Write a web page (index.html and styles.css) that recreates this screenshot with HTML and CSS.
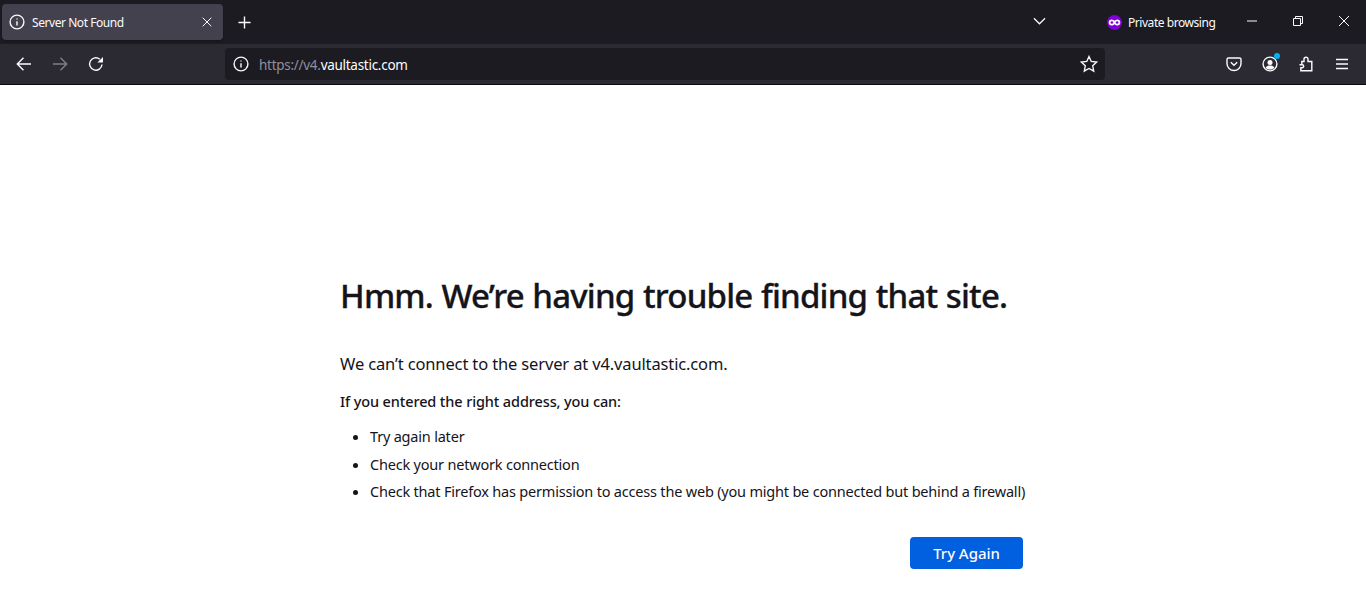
FILE: index.html
```html
<!DOCTYPE html>
<html lang="en">
<head>
<meta charset="utf-8">
<title>Server Not Found</title>
<link rel="stylesheet" href="styles.css">
</head>
<body>
<header class="chrome">
  <div class="tabbar">
    <div class="tab">
      <svg class="ic16" viewBox="0 0 16 16"><circle cx="8" cy="8" r="6.9"/><path d="M8 7.2v4.2M8 4.400v1.200"/></svg>
      <span class="tab-title">Server Not Found</span>
      <svg class="tab-close" viewBox="0 0 10 10"><path d="M.7.7l8.600 8.600M9.300.7L.7 9.300"/></svg>
    </div>
    <svg class="new-tab" viewBox="0 0 14 14"><path d="M7 .5v13M.5 7h13"/></svg>
    <svg class="tab-list" viewBox="0 0 14 8"><path d="M1 1l6 6 6-6"/></svg>
    <div class="private">
      <svg class="mask" viewBox="0 0 16 16"><circle cx="8" cy="8" r="8" class="mask-bg"/><path class="mask-fg" d="M5 4.800c1.400 0 2.200.8 3 1.400C8.800 5.600 9.600 4.800 11 4.800c1.900 0 3.200 1.300 3.200 3.200s-1.300 3.200-3.200 3.200c-1.400 0-2.200-.8-3-1.400-.8.6-1.600 1.400-3 1.400-1.900 0-3.200-1.300-3.200-3.200S3.100 4.800 5 4.800z"/><circle cx="5.200" cy="8" r="1.400" class="mask-bg"/><circle cx="10.800" cy="8" r="1.400" class="mask-bg"/></svg>
      <span>Private browsing</span>
    </div>
    <div class="win-controls">
      <svg viewBox="0 0 10 10" class="win"><path d="M0 5h10"/></svg>
      <svg viewBox="0 0 10 10" class="win"><path d="M.5 2.500h7v7h-7zM2.500 2.500V.5h7v7H7.500"/></svg>
      <svg viewBox="0 0 10 10" class="win"><path d="M0 0l10 10M10 0L0 10"/></svg>
    </div>
  </div>
  <div class="toolbar">
    <div class="nav">
      <svg class="ic16" viewBox="0 0 16 16"><path d="M15 8H1.500M7.500 1.800L1.300 8l6.200 6.200"/></svg>
      <svg class="ic16 dim" viewBox="0 0 16 16"><path d="M1 8h13.500M8.500 1.800L14.700 8l-6.200 6.200"/></svg>
      <svg class="ic16" viewBox="0 0 16 16"><path d="M14 8.500A6.200 6.200 0 1 1 11.800 3.200"/><path class="fill" d="M15 1v5.600H9.400z"/></svg>
    </div>
    <div class="urlbar">
      <svg class="ic16" viewBox="0 0 16 16"><circle cx="8" cy="8" r="6.900"/><path d="M8 7.200v4.200M8 4.400v1.200"/></svg>
      <span class="url"><span class="url-dim">https://v4.</span>vaultastic.com</span>
      <svg class="ic18 star" viewBox="0 0 16 16"><path d="M8 1.300l2 4.400 4.800.6-3.500 3.300.9 4.800L8 12l-4.200 2.400.9-4.800L1.200 6.300 6 5.700z"/></svg>
    </div>
    <div class="tools">
      <svg class="ic16" viewBox="0 0 16 16"><path d="M2.500 2h11A1.500 1.500 0 0 1 15 3.500V7.500a7 7 0 0 1-14 0V3.500A1.500 1.500 0 0 1 2.500 2z"/><path d="M4.800 6.300L8 9.300l3.200-3"/></svg>
      <span class="account">
        <svg class="ic16" viewBox="0 0 16 16"><circle cx="8" cy="8" r="6.900"/><circle class="fill" cx="8" cy="6.400" r="2.500"/><path class="fill" d="M3.500 11.800c1-1.600 2.500-2.200 4.500-2.200s3.500.6 4.500 2.200C11.300 13 9.800 13.600 8 13.600s-3.300-.6-4.500-1.800z"/></svg>
        <i class="badge"></i>
      </span>
      <svg class="ic16 puzzle" viewBox="0 0 16 16"><path d="M1.500 8.700h2.700a1.500 1.500 0 0 1 0 3H2.800v3.100h11V5.500H10V3.200a2 2 0 0 0-4 0v2.300H3.800v3.200"/></svg>
      <svg class="ic16" viewBox="0 0 16 16"><path d="M2 3.500h12M2 8h12M2 12.500h12"/></svg>
    </div>
  </div>
</header>
<main class="page">
  <div class="content">
    <h1>Hmm. We’re having trouble finding that site.</h1>
    <p class="lead">We can’t connect to the server at v4.vaultastic.com.</p>
    <p class="sub">If you entered the right address, you can:</p>
    <ul>
      <li>Try again later</li>
      <li>Check your network connection</li>
      <li>Check that Firefox has permission to access the web (you might be connected but behind a firewall)</li>
    </ul>
    <div class="actions"><button class="retry">Try Again</button></div>
  </div>
</main>
</body>
</html>
```
FILE: styles.css
```css
* { box-sizing: border-box; }
html, body { margin: 0; height: 100%; overflow: hidden; background: #fff; }
body { font-family: "Noto Sans", "Open Sans", sans-serif; color: #15141a; }
svg { display: block; flex: none; fill: none; stroke: #fbfbfe; stroke-width: 1.4; }
.fill { fill: #fbfbfe; stroke: none; }
.ic16 { width: 16px; height: 16px; }
.ic18 { width: 18px; height: 18px; }
.dim { opacity: .4; }

.chrome { color: #fbfbfe; }
.tabbar { height: 44px; background: #1c1b22; display: flex; align-items: center; padding: 0 0 0 2px; }
.tab { width: 221px; height: 36px; background: #42414d; border-radius: 4px; display: flex; align-items: center; padding: 0 11px 0 7px; box-shadow: 0 1px 2px rgba(0,0,0,.3); }
.tab-title { font-size: 12px; margin-left: 7px; flex: 1; letter-spacing: -.44px; }
.tab-close { width: 10px; height: 10px; stroke-width: 1; }
.new-tab { width: 13px; height: 13px; margin-left: 15px; stroke-width: 1.500; }
.tab-list { width: 13px; height: 8px; margin-left: 782px; margin-top: -2px; stroke-width: 1.300; }
.private { display: flex; align-items: center; margin-left: 61px; font-size: 12px; letter-spacing: -.45px; }
.mask { width: 15px; height: 15px; margin-right: 6px; stroke: none; }
.mask-bg { fill: #8000d7; }
.mask-fg { fill: #fbfbfe; }
.win-controls { display: flex; gap: 36px; margin-left: 32px; margin-top: -2px; }
.win { width: 10px; height: 10px; stroke-width: 1; }

.toolbar { height: 41px; background: #2b2a33; border-bottom: 1px solid #0c0c0d; display: flex; align-items: center; }
.nav { width: 225px; display: flex; align-items: center; gap: 20px; padding-left: 16px; }
.urlbar { width: 880px; height: 32px; background: #1c1b22; border-radius: 4px; display: flex; align-items: center; padding: 0 7px 0 8px; }
.url { font-size: 13.500px; flex: 1; margin-left: 10px; letter-spacing: -.28px; padding-top: 2px; }
.url-dim { color: #8f8f9d; }
.star { stroke-width: 1.200; }
.tools { display: flex; align-items: center; gap: 20px; margin-left: 121px; }
.account { position: relative; display: block; }
.badge { position: absolute; top: -3px; right: -2px; width: 6px; height: 6px; border-radius: 50%; background: #00b3f4; }

.page { display: flex; padding: 189px 0 0 340px; }
.content { width: 690px; }
h1 { margin: 0; font-size: 33px; font-weight: 500; -webkit-text-stroke: .3px #15141a; line-height: 44px; letter-spacing: -.79px; word-spacing: .6px; white-space: nowrap; }
.lead { margin: 35px 0 0; font-size: 16.500px; line-height: 22px; letter-spacing: -.14px; }
.sub { margin: 16px 0 0; font-size: 14.500px; font-weight: 500; line-height: 20px; letter-spacing: -.12px; }
ul { margin: 15px 0 0; padding: 0 0 0 30px; font-size: 14.500px; letter-spacing: -.2px; white-space: nowrap; }
li { line-height: 20px; margin-bottom: 7.500px; }
.actions { display: flex; justify-content: flex-end; padding: 28.500px 7px 0 0; }
.retry { width: 113px; height: 32px; border: 0; border-radius: 4px; background: #0060df; color: #fbfbfe; font: 500 15px "Noto Sans", sans-serif; letter-spacing: -.05px; padding: 0; }
```
